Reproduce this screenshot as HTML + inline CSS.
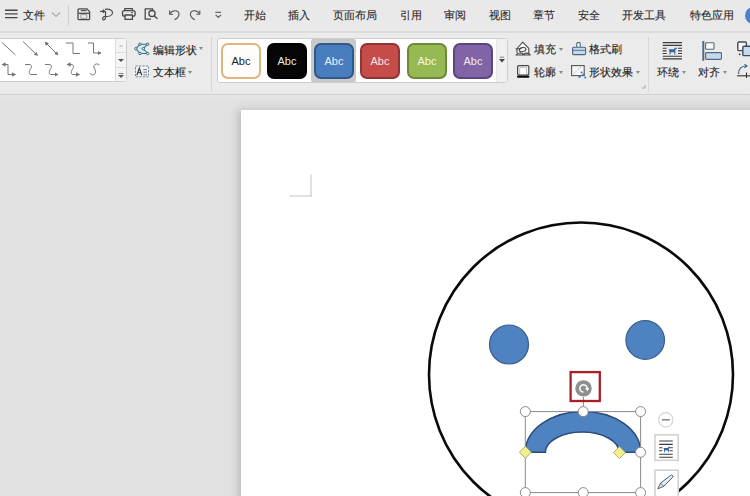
<!DOCTYPE html>
<html><head><meta charset="utf-8">
<style>
*{margin:0;padding:0;box-sizing:border-box}
html,body{width:750px;height:496px;overflow:hidden}
body{position:relative;background:#e1e1e1;-webkit-text-stroke:0.12px currentColor;font-family:"Liberation Sans",sans-serif;color:#333}
.a{position:absolute}
#menubar{left:0;top:0;width:750px;height:31px;background:#e9e9e9}
.mt{position:absolute;top:7px;font-size:11px;line-height:16px;color:#2a2a2a;white-space:nowrap}
#ribbon{left:0;top:31px;width:750px;height:64px;background:#ebebeb;border-top:2px solid #dcdcdc;border-bottom:1px solid #cfcfcf}
.rt{position:absolute;font-size:11px;line-height:14px;color:#222;white-space:nowrap}
.dd{position:absolute;width:0;height:0;border-left:2.5px solid transparent;border-right:2.5px solid transparent;border-top:3px solid #888}
.sw{-webkit-text-stroke:0;position:absolute;top:43px;width:40px;height:36px;border-radius:7px;font-size:11px;line-height:33px;text-align:center}
.sep{position:absolute;width:1px;background:#d4d4d4}
</style></head>
<body>
<!-- menu bar -->
<div id="menubar" class="a">
  <svg class="a" style="left:0;top:0" width="240" height="31" viewBox="0 0 240 31">
    <g stroke="#444" stroke-width="1.4" fill="none">
      <path d="M5 10.2H17.6M5 13.9H17.6M5 17.6H17.6"/>
    </g>
    <path d="M52 12.5L56 16.5L60 12.5" stroke="#aaa" stroke-width="1.1" fill="none"/>
    <path d="M68.5 5V25" stroke="#cfcfcf" stroke-width="1"/>
    <g fill="none" stroke="#4a4a4a" stroke-width="1.3" stroke-linejoin="round">
      <path d="M79.2 8.8H86.8L89.6 11.6V18.4Q89.6 19.6 88.4 19.6H79.2Q78 19.6 78 18.4V10Q78 8.8 79.2 8.8Z"/>
      <path d="M80.8 10.6H86.6" stroke-width="1.1"/>
      <path d="M78.4 13.3H89.2"/>
      <rect x="80.8" y="14.6" width="6" height="3.8" stroke="#8a8a8a" stroke-width="0.8"/>
      <path d="M100 11.3H104.5M102.8 9.7L104.6 11.3L102.8 12.9" stroke-width="1.2"/>
      <path d="M105 9.3C110 8.5 112.8 10.5 112.5 13C112.2 15.5 109 16.7 106 16.5M105.5 11V17.5C105.5 19.5 103 21 102.6 19C102.3 17.5 104 16 106 16.3" stroke-width="1.2"/>
      <path d="M124.8 10.4V8.6H132.4V10.4"/>
      <rect x="122.5" y="10.6" width="12.6" height="5.6" rx="2"/>
      <rect x="125" y="15" width="7.4" height="4.4" fill="#e9e9e9"/>
      <path d="M131 12.6H133" stroke-width="1"/>
      <path d="M151 19.2H145.2V8.9H152.6V10.5" />
      <circle cx="152" cy="13.6" r="3.1" fill="#e9e9e9"/>
      <path d="M154.3 16L157.5 18.8"/>
      <g stroke="#555" stroke-width="1.1">
      <path d="M170.2 13.6C172 9.8 178.7 9.6 179 14.2C179.2 16.6 176.8 18.5 174.6 19.8"/>
      <path d="M169.6 10.6V14.2H173"/>
      <path d="M199.2 13.6C197.4 9.8 190.7 9.6 190.4 14.2C190.2 16.6 192.6 18.5 194.8 19.8"/>
      <path d="M199.8 10.6V14.2H196.4"/>
      <path d="M215.3 12.3H221"/>
      <path d="M215.6 14.8L218.3 17.4L221 14.8"/>
      </g>
    </g>
  </svg>
  <div class="mt" style="left:23px">文件</div>
  <div class="mt" style="left:244px">开始</div>
  <div class="mt" style="left:288px">插入</div>
  <div class="mt" style="left:333px">页面布局</div>
  <div class="mt" style="left:400px">引用</div>
  <div class="mt" style="left:444px">审阅</div>
  <div class="mt" style="left:489px">视图</div>
  <div class="mt" style="left:533px">章节</div>
  <div class="mt" style="left:578px">安全</div>
  <div class="mt" style="left:622px">开发工具</div>
  <div class="mt" style="left:690px">特色应用</div>
  <div class="a" style="left:745px;top:7px;width:17px;height:17px;border-radius:50%;background:#4a80d2"></div>
</div>

<!-- ribbon -->
<div id="ribbon" class="a"></div>
<!-- line shapes gallery -->
<div class="a" style="left:-6px;top:38px;width:133px;height:44px;background:#fff;border:1px solid #cdcdcd;border-radius:4px"></div>
<div class="a" style="left:115px;top:39px;width:11px;height:42px;background:#f4f4f4;border-left:1px solid #dedede"></div>
<svg class="a" style="left:0;top:32px" width="750" height="62" viewBox="0 32 750 62">
  <defs>
    <marker id="ah" markerWidth="6" markerHeight="6" refX="3.5" refY="2.5" orient="auto" markerUnits="userSpaceOnUse"><path d="M0 0.3L4 2.5L0 4.7Z" fill="#747474"/></marker>
    <marker id="as" markerWidth="6" markerHeight="6" refX="0.5" refY="2.5" orient="auto" markerUnits="userSpaceOnUse"><path d="M4 0.3L0 2.5L4 4.7Z" fill="#747474"/></marker>
  </defs>
  <g stroke="#767676" stroke-width="1" fill="none">
    <path d="M2 42.5L15.5 55"/>
    <path d="M23 41.5L37.5 55.5" marker-end="url(#ah)"/>
    <path d="M45 42L58 55" marker-start="url(#as)" marker-end="url(#ah)"/>
    <path d="M66 43H73V53.5H80"/>
    <path d="M88 43H93.5V53H101" marker-end="url(#ah)"/>
    <path d="M2 64.5H8V74.5H15.5" marker-start="url(#as)" marker-end="url(#ah)"/>
    <path d="M25 64.5H29C32 64.5 32 67 30.5 69C29 71 28.5 74.5 31 74.5H37"/>
    <path d="M45 64.5H49C52 64.5 52 67 50.5 69C49 71 48.5 74.5 51 74.5H58" marker-end="url(#ah)"/>
    <path d="M67 64.5H71C74 64.5 74 67 72.5 69C71 71 70.5 74.5 73 74.5H79.5" marker-start="url(#as)" marker-end="url(#ah)"/>
    <path d="M90 73C91 76 96 75.5 95.5 71.5C95 68 93 67.5 94 65.5C95 63.5 98 63.5 99.5 65"/>
  </g>
  <g stroke="#dedede" stroke-width="1"><path d="M116 52.5H126M116 67.5H126"/></g>
  <path d="M118.5 47L121 44.5L123.5 47Z" fill="#cfcfcf"/>
  <path d="M118 59L121 62L124 59Z" fill="#555"/>
  <path d="M118.5 73.5H123.5" stroke="#666" stroke-width="0.8"/>
  <path d="M118 75L121 78L124 75Z" fill="#555"/>
  <path d="M211.5 37V92" stroke="#d6d6d6" stroke-width="1"/>
  <path d="M648.5 37V92" stroke="#d6d6d6" stroke-width="1"/>
  <path d="M645 85V88H642" stroke="#999" stroke-width="0.8" fill="none"/>
</svg>
<!-- edit shape / textbox -->
<svg class="a" style="left:130px;top:38px" width="24" height="44" viewBox="130 38 24 44">
  <path d="M140 44.2H147.7L143.3 48.7L147.7 53.5H140L135.8 48.7Z" fill="#d3ebf6" stroke="#3e6c80" stroke-width="1.1" stroke-linejoin="round"/>
  <g fill="#e6f3f9" stroke="#3e6c80" stroke-width="1">
    <circle cx="140" cy="44.2" r="1.2"/><circle cx="147.7" cy="44.2" r="1.2"/><circle cx="135.8" cy="48.7" r="1.2"/><circle cx="143.3" cy="48.7" r="1.2"/><circle cx="140" cy="53.5" r="1.2"/><circle cx="147.7" cy="53.5" r="1.2"/>
  </g>
  <rect x="135.5" y="66" width="13" height="10.8" fill="#eef4f8" stroke="#6f8797" stroke-width="1" stroke-dasharray="2.2 1.2"/>
  <path d="M136.8 75.2L139.3 68.2L141.8 75.2M137.7 72.8H140.9" fill="none" stroke="#333" stroke-width="1.1"/>
  <path d="M143.3 69.6H147M143.3 72.2H147M143.3 74.8H147" stroke="#666" stroke-width="0.9"/>
</svg>
<div class="rt" style="left:153px;top:43px">编辑形状</div>
<div class="dd" style="left:199px;top:47px"></div>
<div class="rt" style="left:153px;top:65px">文本框</div>
<div class="dd" style="left:188px;top:71px"></div>



<!-- style gallery -->
<div class="a" style="left:217px;top:38px;width:291px;height:45px;background:#fff;border:1px solid #cdcdcd;border-radius:3px"></div>
<div class="a" style="left:496px;top:39px;width:11px;height:43px;background:#f0f0f0;border-left:1px solid #e6e6e6"></div>
<svg class="a" style="left:496px;top:55px" width="12" height="12" viewBox="0 0 12 12"><path d="M3.8 2.2H8.2" stroke="#777" stroke-width="0.9"/><path d="M3 4L6 7.5L9 4Z" fill="#444"/></svg>
<div class="a" style="left:311px;top:39px;width:45px;height:43px;background:#c9c9c9;border-radius:2px"></div>
<div class="sw" style="left:221px;background:#fffdfa;border:2.5px solid #e2b47e;color:#222">Abc</div>
<div class="sw" style="left:267px;background:#050505;border:2px solid #000;color:#e8e8e8">Abc</div>
<div class="sw" style="left:314px;background:#4a7dbd;border:2px solid #30598b;color:#e9f0f8">Abc</div>
<div class="sw" style="left:360px;background:#c64c4a;border:2px solid #8f3533;color:#f6e6e6">Abc</div>
<div class="sw" style="left:407px;background:#97b954;border:2px solid #6b8a37;color:#f1f6e6">Abc</div>
<div class="sw" style="left:453px;background:#8064a6;border:2px solid #5a4682;color:#eee8f4">Abc</div>

<!-- fill / outline -->
<svg class="a" style="left:510px;top:38px" width="80" height="44" viewBox="510 38 80 44">
  <g fill="none" stroke="#4a4a4a" stroke-width="1.1" stroke-linejoin="round">
    <path d="M517 53V48.5L522.7 42.2L528.8 48.3V53.5" fill="#f7f7f7"/>
    <path d="M515.6 48.8H521.2"/>
    <ellipse cx="522.6" cy="49.6" rx="3.4" ry="2" transform="rotate(-12 522.6 49.6)"/>
    <path d="M516 55C518 52.4 521.6 52.4 523.4 54.4C525.4 52.6 528.6 52.8 530.2 55Z" fill="#dcdcdc" stroke-width="1.2"/>
  </g>
  <rect x="517.6" y="65.6" width="11.2" height="9.2" rx="1" fill="#f4f4f4" stroke="#474747" stroke-width="1.2"/>
  <rect x="519.8" y="67.8" width="6.8" height="6.5" fill="#fff" stroke="#9a9a9a" stroke-width="0.6"/>
  <rect x="517" y="75.4" width="12.4" height="2.3" rx="1" fill="#0c0c0c"/>
  <g stroke="#4b6681" stroke-width="1.1" stroke-linejoin="round">
    <path d="M576.8 47V43.3C576.8 42.4 580.2 42.4 580.2 43.3V47" fill="#fff"/>
    <rect x="572.6" y="47.2" width="13" height="7.4" rx="1" fill="#c4dbef"/>
    <path d="M572.8 50.3H585.4" stroke-width="0.9"/>
  </g>
  <rect x="571.6" y="65.6" width="12.6" height="10" fill="#f6f6f6" stroke="#555" stroke-width="1.1"/>
  <path d="M574 73.5L577 70.5M578 69.5L581 67" stroke="#8aa8c4" stroke-width="0.9" stroke-dasharray="1.5 1"/>
  <g fill="#3f7fc0"><circle cx="579.5" cy="76.8" r="1.2"/><circle cx="583.6" cy="74.6" r="1.2"/><circle cx="581.6" cy="72.4" r="1"/><circle cx="585.2" cy="77.6" r="1"/></g>
</svg>
<div class="rt" style="left:534px;top:42px">填充</div>
<div class="dd" style="left:559px;top:48px"></div>
<div class="rt" style="left:534px;top:65px">轮廓</div>
<div class="dd" style="left:559px;top:71px"></div>
<div class="rt" style="left:589px;top:42px">格式刷</div>
<div class="rt" style="left:589px;top:65px">形状效果</div>
<div class="dd" style="left:636px;top:71px"></div>

<!-- wrap / align / group -->
<svg class="a" style="left:650px;top:36px" width="100" height="46" viewBox="650 36 100 46">
  <g stroke="#3b3b3b" stroke-width="1.15">
    <path d="M662.7 42.6H682M662.7 45.4H682M662.7 56.2H682M662.7 58.9H682"/>
    <path d="M662.7 48.2H666.6M678 48.2H682M662.7 50.9H666.6M678 50.9H682M662.7 53.5H666.6M678 53.5H682"/>
  </g>
  <path d="M668.6 49.6L669.3 49.2H673.8L675.3 47.4L677.2 48.2L676.6 49L675.4 49.6V54.6H674.3V52.2H670.6V54.6H669.5V51.5Z" fill="#35659e"/>
  <path d="M703.3 41V60.8" stroke="#56697c" stroke-width="2"/>
  <rect x="705.6" y="42.7" width="8.4" height="6.6" rx="0.8" fill="#fafafa" stroke="#56697c" stroke-width="1.1"/>
  <rect x="705.6" y="52.6" width="15.8" height="6.8" rx="0.8" fill="#c4dbef" stroke="#56697c" stroke-width="1.1"/>
  <rect x="737.8" y="42" width="8.6" height="8.6" rx="1.2" fill="#fafafa" stroke="#3f4d5a" stroke-width="1.4"/>
  <rect x="742.8" y="46.3" width="9" height="9.3" rx="1.2" fill="#c4dbef" stroke="#3f4d5a" stroke-width="1.4"/>
  <circle cx="739.6" cy="54.3" r="0.9" fill="#333"/>
  <g fill="none" stroke-width="1.1">
    <path d="M738.5 74C738.5 69 741.5 66.2 746 66" stroke="#44627f" stroke-width="1.2"/>
    <path d="M744.5 64.2L747 66L744.5 67.8" stroke="#44627f" stroke-width="1.2"/>
    <path d="M737 75.8H751" stroke="#333"/>
    <path d="M746.5 72.5V78" stroke="#333"/>
  </g>
</svg>
<div class="rt" style="left:657px;top:65px">环绕</div>
<div class="dd" style="left:682px;top:71px"></div>
<div class="rt" style="left:698px;top:65px">对齐</div>
<div class="dd" style="left:723px;top:71px"></div>

<!-- canvas page -->
<div class="a" style="left:0;top:95px;width:750px;height:6px;background:linear-gradient(to bottom,#e6e6e6,#e1e1e1)"></div>
<div class="a" style="left:241px;top:109.5px;width:520px;height:400px;background:#fff;box-shadow:-3px 0 8px rgba(0,0,0,0.17)"></div>

<!-- drawing -->
<svg class="a" style="left:0;top:0" width="750" height="496" viewBox="0 0 750 496">
  <path d="M311 174.5V196.5M289.5 196H311.5" stroke="#c4c4c4" stroke-width="1" fill="none"/>
  <circle cx="581" cy="374.5" r="152" fill="none" stroke="#0a0a0a" stroke-width="2.6"/>
  <circle cx="509" cy="344.5" r="19.5" fill="#4e82c1" stroke="#385e8c" stroke-width="1.2"/>
  <circle cx="645.2" cy="340" r="19.3" fill="#4e82c1" stroke="#385e8c" stroke-width="1.2"/>
  <path d="M525.3 452.3A57.7 40.9 0 0 1 640.7 452.3H619.2A36.9 20.2 0 0 0 545.4 452.3Z" fill="#4e82c1" stroke="#2b4c78" stroke-width="1.5"/>
  <!-- selection -->
  <rect x="525.3" y="411.6" width="115.3" height="81" fill="none" stroke="#8a8a8a" stroke-width="1"/>
  <path d="M583.4 397V406.6" stroke="#8a8a8a" stroke-width="1"/>
  <g fill="#fff" stroke="#8a8a8a" stroke-width="1">
    <circle cx="525.3" cy="411.6" r="5"/><circle cx="583.2" cy="411.6" r="5"/><circle cx="640.6" cy="411.6" r="5"/>
    <circle cx="640.6" cy="452.3" r="5"/>
    <circle cx="525.3" cy="492.6" r="5"/><circle cx="583.2" cy="492.6" r="5"/><circle cx="640.6" cy="492.6" r="5"/>
  </g>
  <path d="M525.3 446.3L531.3 452.3L525.3 458.3L519.3 452.3Z" fill="#f3ef8e" stroke="#a4a060" stroke-width="0.9"/>
  <path d="M619.4 446.6L625.4 452.6L619.4 458.6L613.4 452.6Z" fill="#f3ef8e" stroke="#a4a060" stroke-width="0.9"/>
  <circle cx="583.5" cy="388.4" r="8.2" fill="#8f8f8f"/>
  <path d="M583.5 392.1A3.7 3.7 0 1 1 587.2 388.6" fill="none" stroke="#fff" stroke-width="1.5"/>
  <path d="M585.2 388L587.3 391.2L589.3 388Z" fill="#fff"/>
  <rect x="570.6" y="372.1" width="29.2" height="28.9" fill="none" stroke="#a91f25" stroke-width="2.3"/>
  <!-- side buttons -->
  <circle cx="665.8" cy="419.8" r="7.2" fill="#fff" stroke="#d4d4d4" stroke-width="1.1"/>
  <path d="M661.8 419.8H669.8" stroke="#7a7a7a" stroke-width="1.4"/>
  <rect x="655" y="434.8" width="23.2" height="25.5" fill="#fff" stroke="#d2d2d2" stroke-width="1.6"/>
  <g stroke="#3c3c3c" stroke-width="1.1"><path d="M659.2 441H672.8M659.2 444.4H672.8M659.2 454.2H672.8M659.2 457.2H672.8M659.2 447.8H662.4M669.6 447.8H672.8M659.2 450.8H662.4M669.6 450.8H672.8"/></g>
  <path d="M663.4 448.3L664 448H667.6L668.9 446.6L670.5 447.3L669.9 448L668.9 448.4V452.2H668V450.4H665V452.2H664.1V449.8Z" fill="#35659e"/>
  <rect x="655" y="470.2" width="23.2" height="30" fill="#fff" stroke="#d2d2d2" stroke-width="1.6"/>
  <path d="M657.8 488.8L660.5 483.2L670.6 475.4C671.8 474.5 673.6 475.6 672.9 477L663.8 486.3Z" fill="#e3eef6" stroke="#4d5d6b" stroke-width="1"/>
  <path d="M660.5 483.2L663.8 486.3" stroke="#4d5d6b" stroke-width="0.9"/>
</svg>

</body></html>
